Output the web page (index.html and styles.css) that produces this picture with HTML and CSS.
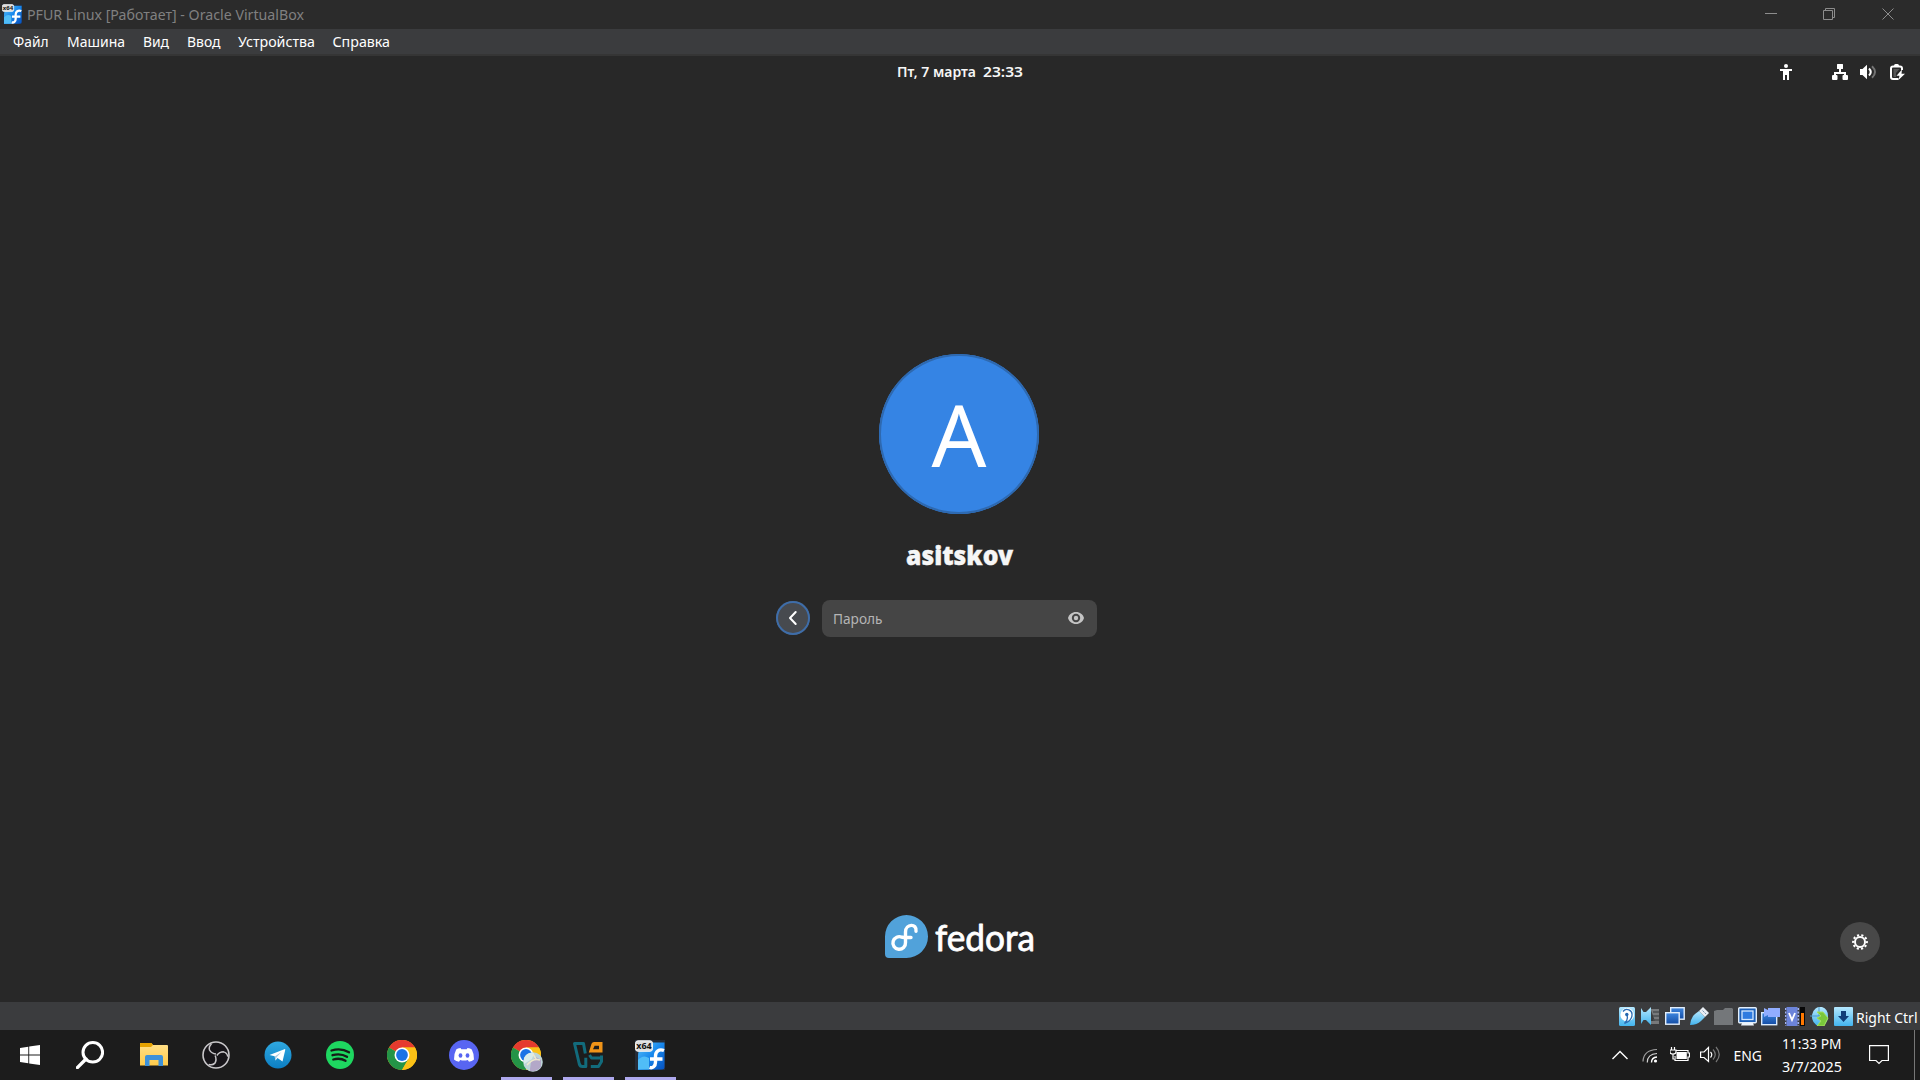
FILE: index.html
```
<!DOCTYPE html>
<html lang="ru">
<head>
<meta charset="utf-8">
<title>PFUR Linux [Работает] - Oracle VirtualBox</title>
<link rel="stylesheet" href="styles.css">
</head>
<body>
<svg class="defs" aria-hidden="true">
  <defs>
    <linearGradient id="fed" x1="0" y1="0" x2="1" y2="1"><stop offset="0" stop-color="#58c2fa"/><stop offset=".5" stop-color="#1686ec"/><stop offset="1" stop-color="#0650bd"/></linearGradient>
    <linearGradient id="ice" x1="0" y1="0" x2="0" y2="1"><stop offset="0" stop-color="#b5e8ff"/><stop offset="1" stop-color="#43b4ee"/></linearGradient>
    <linearGradient id="blue" x1="0" y1="0" x2="0" y2="1"><stop offset="0" stop-color="#3f87df"/><stop offset="1" stop-color="#124ca5"/></linearGradient>
    <linearGradient id="tg" x1="0" y1="0" x2="0" y2="1"><stop offset="0" stop-color="#2fa8e0"/><stop offset="1" stop-color="#0c7fc4"/></linearGradient>
    <linearGradient id="fold" x1="0" y1="0" x2="0" y2="1"><stop offset="0" stop-color="#ffe08a"/><stop offset="1" stop-color="#ffcb4b"/></linearGradient>
    <symbol id="vm" viewBox="0 0 30 30">
      <rect width="30" height="30" fill="#252c38"/>
      <path d="M3 30V16C3 8 9 2.500 17 2.500H29.500V27Q29.500 29.500 27 29.500Z" fill="url(#fed)"/>
      <path d="M3 20Q8 14 14 18V29.500H3Z" fill="#50bdf7"/>
      <path d="M29 10.500C24 8.500 20.500 11.500 20.500 16V22C20.500 26.500 17.500 28.500 14.500 27.500M15 19H27.500" fill="none" stroke="#fff" stroke-width="3.400"/>
      <rect x=".5" y=".8" width="17" height="10.500" rx="2.500" fill="#dedede" stroke="#f4f4f4"/>
      <text x="1.300" y="9.300" textLength="15.400" lengthAdjust="spacingAndGlyphs" class="vm-text">x64</text>
    </symbol>
    <symbol id="chrome" viewBox="0 0 30 30">
      <circle cx="15" cy="15" r="15" fill="#fbc116"/>
      <path d="M15 15L2 7.500A15 15 0 0 1 28 7.500H15Z" fill="#e53a2e"/>
      <path d="M2 7.500A15 15 0 0 0 15 30L21.500 18.800L15 15Z" fill="#249447"/>
      <path d="M15 7.500H28A15 15 0 0 1 15 30L21.500 18.750Z" fill="#fbc116"/>
      <circle cx="15" cy="15" r="7.500" fill="#fff"/><circle cx="15" cy="15" r="5.900" fill="#1b73e6"/>
    </symbol>
  </defs>
</svg>

<header class="titlebar">
  <svg class="vm-small" width="20" height="20"><use href="#vm"/></svg>
  <svg class="label title-text" width="277" height="29"><text x="0" y="20" textLength="277" lengthAdjust="spacingAndGlyphs">PFUR Linux [Работает] - Oracle VirtualBox</text></svg>
  <div class="window-controls">
    <svg width="12" height="12"><path d="M0 5.500H12"/></svg>
    <svg width="12" height="12"><path d="M.5 2.500H9.500V11.500H.5ZM2.500 2.500V.5H11.500V9.500H9.500"/></svg>
    <svg width="12" height="12"><path d="M.5 .5L11.500 11.500M11.500 .5L.5 11.500"/></svg>
  </div>
</header>

<nav class="menubar">
  <svg class="label" width="36" height="24"><text x="0" y="18" textLength="35.500" lengthAdjust="spacingAndGlyphs">Файл</text></svg>
  <svg class="label" width="58" height="24"><text x="0" y="18" textLength="58" lengthAdjust="spacingAndGlyphs">Машина</text></svg>
  <svg class="label" width="26" height="24"><text x="0" y="18" textLength="26" lengthAdjust="spacingAndGlyphs">Вид</text></svg>
  <svg class="label" width="33" height="24"><text x="0" y="18" textLength="33.500" lengthAdjust="spacingAndGlyphs">Ввод</text></svg>
  <svg class="label" width="77" height="24"><text x="0" y="18" textLength="77" lengthAdjust="spacingAndGlyphs">Устройства</text></svg>
  <svg class="label" width="57" height="24"><text x="-.5" y="18" textLength="57.500" lengthAdjust="spacingAndGlyphs">Справка</text></svg>
</nav>

<main class="guest">
  <div class="topbar">
    <svg class="label clock" width="126" height="32"><text x="0" y="21" textLength="79" lengthAdjust="spacingAndGlyphs">Пт, 7 марта</text><text x="86" y="21" textLength="40" lengthAdjust="spacingAndGlyphs">23:33</text></svg>
    <div class="indicators">
      <svg class="a11y" width="16" height="16" fill="#fff"><circle cx="8" cy="2" r="2"/><path d="M2 5H14V7H11V16H9V11H7V16H5V7H2Z"/></svg>
      <svg width="16" height="16" fill="#fff"><path d="M5.500 0H10.500Q11 0 11 .5V4.500Q11 5 10.500 5H9V8H14V11H15Q16 11 16 12V15Q16 16 15 16H11.500Q10.500 16 10.500 15V12Q10.500 11 11.500 11H12V10H4V11H4.500Q5.500 11 5.500 12V15Q5.500 16 4.500 16H1Q0 16 0 15V12Q0 11 1 11H2V8H7V5H5.500Q5 5 5 4.500V.5Q5 0 5.500 0Z"/></svg>
      <svg class="volume" width="17" height="16"><path d="M0 5H2.500L7 .8V15.200L2.500 11H0Z" fill="#fff"/><path d="M9 4.500Q12.500 8 9 11.500" fill="none" stroke="#fff" stroke-width="2"/><path d="M12 2.200Q18 8 12 13.800" fill="none" stroke="#747474" stroke-width="2"/></svg>
      <svg class="power" width="16" height="16"><path d="M8.500 15H3Q1 15 1 13V4.500Q1 2.500 3 2.500H10Q12 2.500 12 4.500V6" fill="none" stroke="#fff" stroke-width="2"/><path d="M4 2.500V1.500Q4 0 5.500 0H7.500Q9 0 9 1.500V2.500Z" fill="#fff"/><path d="M3.500 5H9.500L6 9V13H3.500Z" fill="#555"/><path d="M12 5.500L6.500 11.800H9.500L8.500 16L15 9.800H11.500Z" fill="#fff"/></svg>
    </div>
  </div>

  <section class="login">
    <div class="avatar"><svg class="label" width="160" height="160"><text x="80" y="113" text-anchor="middle">A</text></svg></div>
    <svg class="label user" width="106" height="36"><text x="-1" y="27" textLength="107" lengthAdjust="spacingAndGlyphs">asitskov</text></svg>
    <div class="entry-row">
      <button class="back" aria-label="Назад"><svg width="16" height="16"><path d="M10.700 2L5 8L10.700 14" fill="none" stroke="#fff" stroke-width="2" stroke-linecap="round" stroke-linejoin="round"/></svg></button>
      <div class="entry">
        <svg class="label" width="50" height="37"><text x="0" y="24" textLength="49.500" lengthAdjust="spacingAndGlyphs">Пароль</text></svg>
        <svg class="eye" width="16" height="16"><path d="M8 2C12 2 15 4.500 16 8C15 11.500 12 14 8 14S1 11.500 0 8C1 4.500 4 2 8 2Z" fill="#c4c4c4"/><circle cx="8" cy="8" r="4.200" fill="#454545"/><circle cx="8" cy="8" r="2.200" fill="#c4c4c4"/></svg>
      </div>
    </div>
  </section>

  <footer class="guest-footer">
    <div class="brand">
      <svg width="43" height="43"><path d="M21.500 0A21.500 21.500 0 1 1 21.500 43H4Q0 43 0 39V21.500A21.500 21.500 0 0 1 21.500 0Z" fill="#51a2da"/><path d="M31 16.300C32.200 8 20.500 8.500 20.500 17V27.500A6.300 6.300 0 1 1 17 22.300Q20 22.500 20.500 22.500H26" fill="none" stroke="#fff" stroke-width="3.400" stroke-linecap="round" stroke-linejoin="round"/></svg>
      <svg class="label wordmark" width="100" height="43"><text x="0" y="35.500" textLength="100" lengthAdjust="spacingAndGlyphs">fedora</text></svg>
    </div>
    <button class="session" aria-label="Настройки"><svg width="16" height="16" viewBox="-8 -8 16 16"><circle r="5" fill="none" stroke="#fff" stroke-width="2"/><circle r="6.900" fill="none" stroke="#fff" stroke-width="2" stroke-dasharray="2.168 2.168" stroke-dashoffset="1.084"/></svg></button>
  </footer>
</main>

<footer class="statusbar">
  <span class="slot"><svg width="16" height="19"><rect width="16" height="19" rx="1.500" fill="url(#ice)"/><circle cx="8.200" cy="7.800" r="6.800" fill="#fff"/><path d="M4 4.500A5 5 0 0 1 13 8Q13 13.500 5.500 16.500Q9.500 12.500 8 8.500" fill="none" stroke="#2b6db4" stroke-width="1.300"/><circle cx="7.800" cy="7.500" r="1.700" fill="#2266af"/></svg></span>
  <span class="slot"><svg width="20" height="19"><path d="M9.500 2H18V17H9.500V14H14" fill="#77797b"/><path d="M12 5H18M12 9H18M12 13H18" stroke="#4b4d50" stroke-width="1.300"/><path d="M0 1L2.500 5H5L10 0V18L5 13H2.500L0 17Z" fill="url(#ice)"/></svg></span>
  <span class="slot"><svg width="20" height="19" stroke="#e2eefb" stroke-width="1.400"><rect x="5.700" y=".7" width="13.500" height="11.500" fill="url(#blue)"/><rect x=".7" y="5.700" width="13.500" height="11.500" fill="url(#blue)"/></svg></span>
  <span class="slot"><svg width="19" height="19"><path d="M0 18Q1 10 5 7L9 4L15 10L11 14Q7 18 0 18Z" fill="url(#ice)"/><path d="M9 4L13 0L19 6L15 10Z" fill="#e8edf3"/><path d="M12.500 3.500L14 5M14.500 5.500L16 7" stroke="#7c98b4"/></svg></span>
  <span class="slot"><svg width="19" height="19"><path d="M0 4L3 3H9L11 1H18L19 2V18H0Z" fill="#74777a"/></svg></span>
  <span class="slot"><svg width="19" height="19"><rect x=".7" y=".7" width="17.600" height="15" rx="1" fill="#1c60b9" stroke="#e3effb" stroke-width="1.400"/><rect x="4" y="4" width="11" height="8.500" fill="#2e7be0" stroke="#d1e7ff" stroke-width="1.300"/><path d="M4 16H15L16 18.500H3Z" fill="#edf4fb"/></svg></span>
  <span class="slot"><svg width="20" height="19"><rect x=".7" y="5.700" width="15" height="12" fill="url(#blue)" stroke="#d9eafe" stroke-width="1.400"/><path d="M3 1L7 3V1H19V10H7V8L3 10Z" fill="#91adff"/></svg></span>
  <span class="slot cpu"><svg width="20" height="19"><rect x="1.500" width="11" height="19" fill="#6c84da"/><path d="M.5 1V19M13.300 1V19" stroke="#a0b1f5" stroke-width="1.600" stroke-dasharray="2 1.500"/><path d="M4 6L7 13L10 6" fill="none" stroke="#fff" stroke-width="1.800"/><rect x="15" width="5" height="19" fill="#070707"/><rect x="16" y="6" width="3" height="12" fill="#ff7800"/></svg></span>
  <span class="slot"><svg width="20" height="19"><path d="M13 0A8 9 0 1 0 10 19Q19 18 19 9Q19 2 13 0Z" fill="url(#ice)"/><path d="M10 0V9M1 9H17" stroke="#4c99c9"/><path d="M8 5H14L19 11L15 19H8L12 14L8 11L12 9Z" fill="#79c83b" stroke="#a4e15e"/></svg></span>
  <span class="slot"><svg width="19" height="19"><rect width="19" height="19" rx="1" fill="url(#ice)"/><path d="M7 4H12V9H15L9.500 15L4 9H7Z" fill="#103d78"/></svg></span>
  <svg class="label hostkey" width="62" height="28"><text x="0" y="20.500" textLength="61.500" lengthAdjust="spacingAndGlyphs">Right Ctrl</text></svg>
</footer>

<footer class="taskbar">
  <div class="launchers">
    <span class="app system"><svg width="20" height="20" fill="#fff"><path d="M0 3L8.300 1.800V9.400H0ZM9.200 1.600L20 0V9.400H9.200ZM0 10.400H8.300V18.200L0 17ZM9.200 10.400H20V20L9.200 18.500Z"/></svg></span>
    <span class="app system search"><svg width="28" height="28"><circle cx="16.800" cy="11.300" r="9.800" fill="none" stroke="#fff" stroke-width="3"/><path d="M10 18L1.400 26.600" stroke="#fff" stroke-width="3.400" stroke-linecap="round"/></svg></span>
    <span class="app"><svg width="28" height="30"><path d="M0 4Q0 3 1 3H11L13 5H27Q28 5 28 6V25.500H0Z" fill="url(#fold)"/><path d="M0 7V4Q0 3 1 3H11.500L13 5L11 7Z" fill="#e5a200"/><path d="M5 26V17Q5 15 7 15H21Q23 15 23 17V26H18.500V20H9.500V26Z" fill="#3d91d9"/></svg></span>
    <span class="app"><svg width="28" height="28" viewBox="-14 -14 28 28"><circle r="13" fill="#171519" stroke="#c9c7ca" stroke-width="1.600"/><g fill="none" stroke="#c9c7ca" stroke-width="1.500"><path id="blade" d="M0 -1Q-4.500 -1.500 -6.500 -5Q-7.500 -8.500 -4.500 -11"/><use href="#blade" transform="rotate(120)"/><use href="#blade" transform="rotate(240)"/></g></svg></span>
    <span class="app"><svg width="28" height="28"><circle cx="14" cy="14" r="13.500" fill="url(#tg)"/><path d="M5.500 14L21 8Q21.600 8 21 10L18.500 20.500L13.500 17L11.500 19.500L10.700 15.300Z" fill="#fff"/><path d="M10.700 15.500L17.500 11L12.600 16.200L11.500 19.500Z" fill="#aacce3"/></svg></span>
    <span class="app"><svg width="28" height="28"><circle cx="14" cy="14" r="14" fill="#1ed760"/><path d="M5.500 9.500Q15 6.500 23 11.300M6.500 14.200Q14.500 11.800 21 15.800M7.300 18.500Q14 16.500 19.500 19.800" fill="none" stroke="#161c18" stroke-width="2.300" stroke-linecap="round"/></svg></span>
    <span class="app"><svg width="30" height="30"><use href="#chrome"/></svg></span>
    <span class="app"><svg width="30" height="30"><circle cx="15" cy="15" r="15" fill="#5865f2"/><path d="M11.500 8Q8.500 8.400 7.200 9.500Q4.800 14 5 19.500Q7 21.500 10 21.800L11.200 20Q15 21 18.800 20L20 21.800Q23 21.500 25 19.500Q25.200 14 22.800 9.500Q21.500 8.400 18.500 8L17.700 9.300H12.300Z" fill="#fff"/><ellipse cx="11.500" cy="15.500" rx="1.900" ry="2.200" fill="#5865f2"/><ellipse cx="18.500" cy="15.500" rx="1.900" ry="2.200" fill="#5865f2"/></svg></span>
    <span class="app open"><svg class="profile" width="32" height="32"><use href="#chrome" width="30" height="30"/><circle cx="22" cy="22" r="9.800" fill="#bdd5d8"/><path d="M13 18Q16 12 23 13L21 19L13 24Z" fill="#d9ecea"/><path d="M19 29L20 22L25 17L30 20V27Q26 32 19 31Z" fill="#b3a8c8"/><path d="M16 25Q22 18 29 20M22 14L25 19" fill="none" stroke="#eee8cd" stroke-width="1.500"/></svg></span>
    <span class="app open"><svg width="30" height="26" fill="none" stroke-width="3" stroke-linejoin="round"><path d="M12.300 11.500L10.500 1.500H1.500L6.300 22Q7 24.500 9.300 24.500H12.800V15.800M28.500 13.500V19.500L25.500 24.500H17.800M28.500 16H18.500L16.500 13" stroke="#126b7c"/><path d="M15.800 10.500H29.500V0H21Q19.200 0 18.500 1.800ZM20 7.200L21.600 3.800H26V7.200Z" fill="#ef9318" fill-rule="evenodd"/></svg></span>
    <span class="app open"><svg width="30" height="30"><use href="#vm"/></svg></span>
  </div>
  <div class="tray">
    <span><svg width="16" height="10"><path d="M.5 9L8 1.500L15.500 9" fill="none" stroke="#fff" stroke-width="1.400"/></svg></span>
    <span><svg width="16" height="16" fill="none"><circle cx="13.500" cy="14" r="1.600" fill="#fff"/><path d="M9.500 15.500Q9.500 10.500 15 10" stroke="#fff" stroke-width="1.400"/><path d="M5.300 15.500Q5.300 7 15 6.500" stroke="#d4d4d4" stroke-width="1.200"/><path d="M1 14.500Q1.500 3 15 2.500" stroke="#a0a0a0" stroke-width="1.200"/></svg></span>
    <span><svg width="20" height="16"><path d="M5 3.500H18V6H19.500V10H18V13.500H5V9" fill="none" stroke="#fff" stroke-width="1.200"/><path d="M6.500 5H16.800V12H6.500Z" fill="#fff"/><path d="M1.500 0V3M4.500 0V3M0 3H6V5Q6 7 3 7Q0 7 0 5ZM3 7V12H5" fill="#1c1c1c" stroke="#fff" stroke-width="1.200"/></svg></span>
    <span><svg width="21" height="18" fill="none"><path d="M.6 6H4L8.500 1.500V15.500L4 11.500H.6Z" stroke="#fff" stroke-width="1.200"/><path d="M10.500 6Q13 8.500 10.500 11.500" stroke="#fff" stroke-width="1.200"/><path d="M13 3.500Q17.500 8.500 13 13.500M16 1Q22.500 8.500 16 16" stroke="#777" stroke-width="1.200"/></svg></span>
    <span class="language"><svg class="label" width="29" height="50"><text x="-.5" y="31" textLength="28.500" lengthAdjust="spacingAndGlyphs">ENG</text></svg></span>
    <span class="datetime"><svg class="label" width="60" height="50"><text x="0" y="19" textLength="59.500" lengthAdjust="spacingAndGlyphs">11:33 PM</text><text x="0" y="42" textLength="60" lengthAdjust="spacingAndGlyphs">3/7/2025</text></svg></span>
    <span class="notifications"><svg width="20" height="20"><path d="M.6 .6H19.400V15.500H13L10 18.500L7 15.500H.6Z" fill="none" stroke="#fff" stroke-width="1.200"/></svg></span>
    <i class="desktop-edge"></i>
  </div>
</footer>
</body>
</html>
```
FILE: styles.css
```
* { box-sizing: border-box; }
body {
  margin: 0;
  width: 1920px;
  height: 1080px;
  display: flex;
  flex-direction: column;
  overflow: hidden;
  background: #282828;
  color: #fff;
  font: 15px "Noto Sans", "Open Sans", sans-serif;
}
svg { display: block; flex: none; }
.defs { width: 0; height: 0; position: absolute; }
.label { overflow: visible; fill: #fff; font-family: "Noto Sans", sans-serif; font-size: 15px; }
.vm-text { font: bold 9px "Noto Sans", sans-serif; fill: #111; }
button { padding: 0; border: 0; display: flex; align-items: center; justify-content: center; border-radius: 50%; }

.titlebar { height: 29px; flex: none; display: flex; padding-left: 2px; background: #2b2b2b; }
.vm-small { margin-top: 4px; }
.title-text { margin-left: 5px; fill: #808080; }
.window-controls { display: flex; gap: 46px; margin: 8px 26px 0 auto; fill: none; stroke: #8d8d8d; stroke-width: 1; }
.window-controls svg:last-child { margin-left: 1px; }

.menubar { height: 27px; flex: none; display: flex; gap: 18px; padding-left: 12.500px; background: #3b3c3e; border-bottom: 2px solid #353535; box-shadow: 0 1px #3a3a3a; }

.guest { height: 946px; flex: none; display: flex; flex-direction: column; background: #282828; }
.topbar { height: 32px; flex: none; display: flex; padding-right: 14px; }
.clock { margin-left: 897px; fill: #f6f6f6; font-weight: 600; }
.indicators { margin: 8px 0 0 auto; display: flex; }
.a11y { margin-right: 38px; }
.volume { margin-left: 12px; }
.power { margin-left: 13px; }

.login { margin-top: 266px; display: flex; flex-direction: column; align-items: center; padding-right: 2px; }
.avatar { width: 160px; height: 160px; border-radius: 50%; background: #3584e4; box-shadow: inset 0 0 0 2px #2e69b0; }
.avatar .label { font-size: 86px; }
.user { margin-top: 24px; margin-left: 2px; fill: #f6f6f6; font-size: 26px; font-weight: 900; stroke: #f6f6f6; stroke-width: .4; }
.entry-row { margin: 26px 46px 0 0; width: 321px; display: flex; gap: 12px; }
.back { width: 34px; height: 34px; margin-top: 1px; flex: none; background: #474a4f; box-shadow: inset 0 0 0 2px #3e6da9; }
.entry { width: 275px; height: 37px; display: flex; justify-content: space-between; padding: 0 13px 0 11px; border-radius: 8px; background: #454545; }
.entry .label { fill: #b5b5b5; }
.eye { margin-top: 10px; }

.guest-footer { margin-top: auto; height: 87px; display: flex; padding: 0 40px 0 885px; }
.brand { display: flex; gap: 7px; }
.wordmark { font-family: Lato, sans-serif; font-size: 36px; font-weight: 400; stroke: #fff; stroke-width: .8; stroke-linejoin: round; }
.session { width: 40px; height: 40px; margin: 7px 0 0 auto; background: #484848; }

.statusbar { height: 28px; flex: none; display: flex; justify-content: flex-end; padding-right: 2px; background: #3b3c3e; }
.slot { width: 24px; display: flex; align-items: center; justify-content: center; }
.hostkey { margin-left: 1px; }

.taskbar { height: 50px; flex: none; display: flex; justify-content: space-between; background: #1c1c1c; }
.launchers, .tray { display: flex; }
.app { width: 62px; display: flex; align-items: center; justify-content: center; }
.app.system { width: 60px; }
.app.search { margin-right: 3px; }
.app.open { background: linear-gradient(#aea8ed, #aea8ed) center bottom / 51px 3px no-repeat; }
.profile { margin: 2px 0 0 2px; }
.tray { padding-right: 5px; }
.tray > span { width: 30px; display: flex; align-items: center; justify-content: center; }
.tray > .language { width: 46px; }
.tray > .datetime { width: 82px; }
.tray > .notifications { width: 52px; }
.desktop-edge { width: 1px; margin-left: 9px; background: #777; }
```
